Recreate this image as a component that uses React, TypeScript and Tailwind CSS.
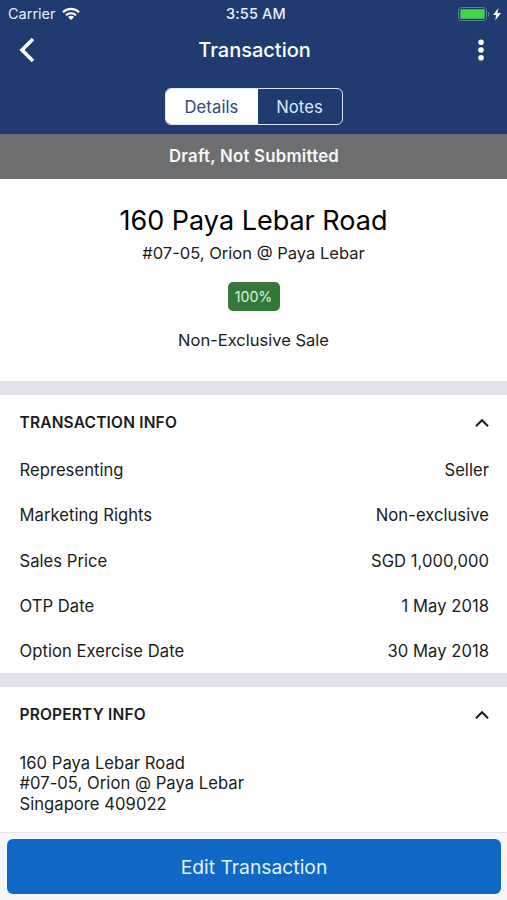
import React, { useState } from 'react';

type Tab = 'Details' | 'Notes';

const transactionInfo = [
  { label: 'Representing', value: 'Seller' },
  { label: 'Marketing Rights', value: 'Non-exclusive' },
  { label: 'Sales Price', value: 'SGD 1,000,000' },
  { label: 'OTP Date', value: '1 May 2018' },
  { label: 'Option Exercise Date', value: '30 May 2018' },
];

export default function App() {
  const [tab, setTab] = useState<Tab>('Details');

  return (
    <div className="flex h-[900px] w-[507px] flex-col overflow-hidden bg-white font-['Inter',sans-serif] text-[#1b1b1b]">
      {/* Header */}
      <header className="h-[134px] shrink-0 bg-[#203b70] text-white">
        <StatusBar />
        <div className="grid h-11 grid-cols-[1fr_auto_1fr] items-center">
          <button aria-label="Back" className="ml-[19px] justify-self-start">
            <svg width="17" height="26" viewBox="0 0 17 26" fill="none" stroke="currentColor" strokeWidth="3.6">
              <path d="M14 2L3 13l11 11" />
            </svg>
          </button>
          <h1 className="pl-0.5 text-[20px] font-medium">Transaction</h1>
          <button aria-label="More" className="mr-[22px] justify-self-end">
            <svg width="8" height="22" viewBox="0 0 8 22" fill="currentColor">
              <circle cx="4" cy="3.2" r="2.8" />
              <circle cx="4" cy="11" r="2.8" />
              <circle cx="4" cy="18.8" r="2.8" />
            </svg>
          </button>
        </div>
        <div className="mx-auto mt-4 flex h-[37px] w-[178px] overflow-hidden rounded-md border border-[#dfe6f5]">
          <TabButton label="Details" active={tab === 'Details'} onClick={() => setTab('Details')} />
          <TabButton label="Notes" active={tab === 'Notes'} onClick={() => setTab('Notes')} />
        </div>
      </header>

      <div className="flex h-[45px] shrink-0 items-center justify-center bg-[#6c6e70] pl-px text-[16.8px] font-semibold tracking-[0.25px] text-[#f7f7f7]">
        Draft, Not Submitted
      </div>

      <main className="min-h-0 flex-1 overflow-hidden">
        {/* Summary */}
        <section className="flex h-[202px] flex-col items-center pt-[23px]">
          <h2 className="text-[27px] leading-[38px] text-black">160 Paya Lebar Road</h2>
          <p className="text-[16.55px] leading-[26px]">#07-05, Orion @ Paya Lebar</p>
          <span className="mt-4 flex h-[29px] w-[52px] items-center justify-center rounded-[5px] bg-[#35783a] pt-px text-[14.2px] text-[#dcf3dc]">
            100%
          </span>
          <p className="mt-[17px] text-[16.5px] leading-[24px]">Non-Exclusive Sale</p>
        </section>

        <Section title="TRANSACTION INFO">
          <dl className="-mb-px">
            {transactionInfo.map(item => (
              <div key={item.label} className="flex h-[45.2px] items-center justify-between">
                <dt>{item.label}</dt>
                <dd>{item.value}</dd>
              </div>
            ))}
          </dl>
        </Section>

        <Section title="PROPERTY INFO">
          <address className="pt-[13px] leading-[20.5px] not-italic">
            160 Paya Lebar Road
            <br />
            #07-05, Orion @ Paya Lebar
            <br />
            Singapore 409022
          </address>
        </Section>
      </main>

      <footer className="h-[68px] shrink-0 border-t border-[#e3e5e6] bg-[#f4f6f8] px-[7px] pt-1.5">
        <button className="h-[55px] w-[494px] rounded-md bg-[#1068c6] pt-0.5 text-[19.3px] text-[#e2f1ff]">
          Edit Transaction
        </button>
      </footer>
    </div>
  );
}

const StatusBar = () => (
  <div className="grid h-7 grid-cols-3 items-center text-[#e8eefb]">
    <div className="flex items-center pl-2 text-[14.5px]">
      <span>Carrier</span>
      <svg className="ml-1.5" width="18" height="14" viewBox="0 0 18 14" fill="none" stroke="white" strokeWidth="2.2">
        <path d="M1 5.2a11.4 11.4 0 0 1 16 0" />
        <path d="M4 8.3a7.1 7.1 0 0 1 10 0" />
        <path d="M9 13L6 10a4.2 4.2 0 0 1 6 0z" fill="white" stroke="none" />
      </svg>
    </div>
    <div className="pl-[5px] text-center text-[14.5px] font-medium tracking-[0.15px]">3:55 AM</div>
    <div className="flex items-center justify-end pr-1.5">
      <svg width="43" height="15" viewBox="0 0 43 15">
        <rect x="0.5" y="0.5" width="28" height="13" rx="3" fill="none" stroke="#637e9c" />
        <rect x="2.3" y="2.3" width="24.4" height="9.4" rx="1" fill="#43d64d" />
        <path d="M30 5v4.5c1.6-.5 1.6-4 0-4.5z" fill="#637e9c" />
        <path d="M40.5 1L35 8h3.2l-1 5.5L43 6h-3.6z" fill="white" />
      </svg>
    </div>
  </div>
);

const TabButton = ({ label, active, onClick }: { label: Tab; active: boolean; onClick: () => void }) => (
  <button
    onClick={onClick}
    className={`pt-0.5 text-[16.6px] tracking-[0.1px] first:w-[92px] last:flex-1 ${active ? 'bg-white text-[#2f4a83]' : 'text-[#dfe8fa]'}`}
  >
    {label}
  </button>
);

const Section = ({ title, children }: { title: string; children: React.ReactNode }) => {
  const [open, setOpen] = useState(true);

  return (
    <section className="border-t-14 border-[#e1e2eb] pr-[18px] pl-[19.5px] text-[16.6px] tracking-[0.04px]">
      <button onClick={() => setOpen(!open)} className="flex h-[53px] w-full items-center justify-between pt-[3px] text-[15.5px] font-semibold tracking-[0.18px]">
        {title}
        <svg className={open ? '' : 'rotate-180'} width="14" height="10" viewBox="0 0 14 10" fill="none" stroke="currentColor" strokeWidth="2">
          <path d="M1 8.2l6-6 6 6" />
        </svg>
      </button>
      {open && children}
    </section>
  );
};
